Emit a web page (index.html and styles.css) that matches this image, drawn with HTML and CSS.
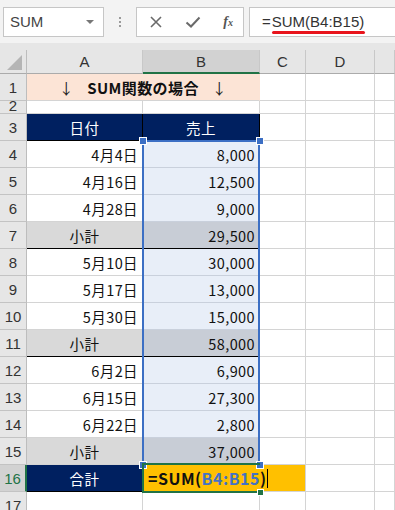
FILE: index.html
```html
<!DOCTYPE html>
<html lang="ja">
<head>
    <meta charset="UTF-8">
    <meta name="viewport" content="width=device-width, initial-scale=1.0">
    <title>SUM関数の場合</title>
    <link rel="stylesheet" href="styles.css">
</head>
<body>

    <div class="toolbar">
        <div class="name-box">
            <span>SUM</span>
            <span class="drop"></span>
        </div>
        <div class="grip"><i></i><i></i><i></i></div>
        <div class="fx-buttons">
            <svg width="14" height="14" viewBox="0 0 14 14"><path d="M2 2 L12 12 M12 2 L2 12" stroke="#6a6a6a" stroke-width="1.6" fill="none"/></svg>
            <svg width="16" height="14" viewBox="0 0 16 14"><path d="M1.5 7.5 L6 11.5 L14.5 2.5" stroke="#6a6a6a" stroke-width="2" fill="none"/></svg>
            <span class="fx">f<sub>x</sub></span>
        </div>
        <div class="formula">=<span class="mark">SUM(B4:B15)</span></div>
    </div>
    <div class="strip"></div>

    <div class="sheet">
        <!-- header row -->
        <div class="corner">
            <svg width="27" height="24" viewBox="0 0 27 24"><polygon points="7,20 22,20 22,5" fill="#b5b5b5"/></svg>
        </div>
        <div class="col-head">A</div>
        <div class="col-head active-head">B</div>
        <div class="col-head">C</div>
        <div class="col-head">D</div>
        <div class="col-head"></div>

        <!-- 1 -->
        <div class="row-head">1</div>
        <div class="c title">↓<b>SUM関数の場合</b>↓</div>
        <div class="c"></div><div class="c"></div><div class="c"></div>

        <!-- 2 -->
        <div class="row-head short"><span>2</span></div>
        <div class="c"></div><div class="c"></div><div class="c"></div><div class="c"></div><div class="c"></div>

        <!-- 3 -->
        <div class="row-head">3</div>
        <div class="c navy ctr">日付</div>
        <div class="c navy ctr">売上</div>
        <div class="c"></div><div class="c"></div><div class="c"></div>

        <div class="row-head">4</div>
        <div class="c r">4月4日</div><div class="c r sel">8,000</div>
        <div class="c"></div><div class="c"></div><div class="c"></div>

        <div class="row-head">5</div>
        <div class="c r">4月16日</div><div class="c r sel">12,500</div>
        <div class="c"></div><div class="c"></div><div class="c"></div>

        <div class="row-head">6</div>
        <div class="c r">4月28日</div><div class="c r sel">9,000</div>
        <div class="c"></div><div class="c"></div><div class="c"></div>

        <div class="row-head">7</div>
        <div class="c ctr sub">小計</div><div class="c r sub sel">29,500</div>
        <div class="c"></div><div class="c"></div><div class="c"></div>

        <div class="row-head">8</div>
        <div class="c r">5月10日</div><div class="c r sel">30,000</div>
        <div class="c"></div><div class="c"></div><div class="c"></div>

        <div class="row-head">9</div>
        <div class="c r">5月17日</div><div class="c r sel">13,000</div>
        <div class="c"></div><div class="c"></div><div class="c"></div>

        <div class="row-head">10</div>
        <div class="c r">5月30日</div><div class="c r sel">15,000</div>
        <div class="c"></div><div class="c"></div><div class="c"></div>

        <div class="row-head">11</div>
        <div class="c ctr sub">小計</div><div class="c r sub sel">58,000</div>
        <div class="c"></div><div class="c"></div><div class="c"></div>

        <div class="row-head">12</div>
        <div class="c r">6月2日</div><div class="c r sel">6,900</div>
        <div class="c"></div><div class="c"></div><div class="c"></div>

        <div class="row-head">13</div>
        <div class="c r">6月15日</div><div class="c r sel">27,300</div>
        <div class="c"></div><div class="c"></div><div class="c"></div>

        <div class="row-head">14</div>
        <div class="c r">6月22日</div><div class="c r sel">2,800</div>
        <div class="c"></div><div class="c"></div><div class="c"></div>

        <div class="row-head">15</div>
        <div class="c ctr sub last">小計</div><div class="c r sub sel">37,000</div>
        <div class="c"></div><div class="c"></div><div class="c"></div>

        <div class="row-head active-row">16</div>
        <div class="c navy ctr">合計</div>
        <div class="c editor">=SUM(<span class="ref">B4:B15</span>)<span class="caret"></span></div>
        <div class="c"></div><div class="c"></div>

        <div class="row-head">17</div>
        <div class="c"></div><div class="c"></div><div class="c"></div><div class="c"></div><div class="c"></div>

        <!-- selection overlays -->
        <div class="range"></div>
        <span class="handle h-tl"></span>
        <span class="handle h-tr"></span>
        <span class="handle h-bl"></span>
        <span class="handle h-br"></span>
        <div class="active-cell"></div>
        <span class="fill-handle"></span>
    </div>

</body>
</html>
```

FILE: styles.css
```css
body {
    margin: 0;
    width: 395px;
    height: 510px;
    overflow: hidden;
    background-color: #fff;
    font-family: "Noto Sans CJK JP", sans-serif;
}

/* formula bar */
.toolbar {
    height: 43px;
    background-color: #f3f3f3;
    display: flex;
    align-items: center;
    padding-left: 3px;
    font-family: "Liberation Sans", Arial, sans-serif;
}

.name-box {
    width: 101px;
    height: 30px;
    box-sizing: border-box;
    background-color: #fff;
    border: 1px solid #c6c6c6;
    display: flex;
    align-items: center;
    justify-content: space-between;
    padding: 0 9px 0 6px;
    font-size: 15px;
    color: #444;
}

.drop {
    width: 0;
    height: 0;
    border-left: 4px solid transparent;
    border-right: 4px solid transparent;
    border-top: 4px solid #777;
}

.grip {
    width: 32px;
    display: flex;
    flex-direction: column;
    align-items: center;
    gap: 2px;
}

.grip i {
    width: 2px;
    height: 2px;
    background-color: #9a9a9a;
}

.fx-buttons {
    width: 108px;
    height: 30px;
    box-sizing: border-box;
    background-color: #fff;
    border: 1px solid #c6c6c6;
    display: flex;
    align-items: center;
    justify-content: space-between;
    padding: 0 10px 0 12px;
}

.fx {
    font-family: "Liberation Serif", serif;
    font-style: italic;
    font-weight: bold;
    font-size: 14px;
    color: #555;
}

.fx sub {
    font-size: 10px;
    vertical-align: baseline;
}

.formula {
    flex: 1;
    margin-left: 5px;
    height: 30px;
    box-sizing: border-box;
    background-color: #fff;
    border: 1px solid #c6c6c6;
    border-right: none;
    padding-left: 12px;
    display: flex;
    align-items: center;
    font-size: 15px;
    color: #333;
}

.mark {
    position: relative;
    margin-left: 1px;
}

.mark::after {
    content: "";
    position: absolute;
    left: 0;
    right: -1px;
    bottom: -4px;
    height: 3px;
    border-radius: 2px;
    background-color: #e8141c;
}

.strip {
    height: 7px;
    background-color: #e6e6e6;
}

/* sheet grid */
.sheet {
    position: relative;
    display: grid;
    grid-template-columns: 27px 116px 117px 46px 69px 1fr;
    grid-template-rows: 24px 27px 13px repeat(15, 27px);
}

.corner {
    background-color: #e6e6e6;
    border-right: 1px solid #bdbdbd;
    border-bottom: 1px solid #ababab;
    box-sizing: border-box;
}

.corner svg {
    display: block;
}

.col-head {
    background-color: #e6e6e6;
    border-right: 1px solid #c8c8c8;
    border-bottom: 1px solid #ababab;
    box-sizing: border-box;
    display: flex;
    align-items: center;
    justify-content: center;
    font-family: "Liberation Sans", Arial, sans-serif;
    font-size: 15px;
    color: #333;
}

.active-head {
    background-color: #d2d2d2;
    border-bottom: 2px solid #217346;
}

.row-head {
    background-color: #e6e6e6;
    border-right: 1px solid #bdbdbd;
    border-bottom: 1px solid #c3c3c3;
    box-sizing: border-box;
    display: flex;
    align-items: center;
    justify-content: center;
    font-family: "Liberation Sans", Arial, sans-serif;
    font-size: 15px;
    color: #333;
    overflow: hidden;
}

.row-head.short span {
    line-height: 27px;
    margin-top: -4px;
}

.active-row {
    background-color: #d2d2d2;
    color: #217346;
    border-right: 2px solid #217346;
}

.c {
    border-right: 1px solid #d4d4d4;
    border-bottom: 1px solid #d4d4d4;
    box-sizing: border-box;
    display: flex;
    align-items: center;
    padding: 0 4px;
    font-size: 14.5px;
    letter-spacing: 0.4px;
    color: #111;
    white-space: nowrap;
    overflow: hidden;
}

.r {
    justify-content: flex-end;
}

.ctr {
    justify-content: center;
}

.title {
    grid-column: span 2;
    justify-content: center;
    gap: 13px;
    background-color: #fce4d6;
    border-right-color: #fce4d6;
    font-size: 15px;
    color: #222;
    padding-left: 4px;
}

.title b {
    color: #111;
}

.navy {
    background-color: #002060;
    color: #fff;
    border-right-color: #000;
    border-bottom-color: #000;
}

.sel {
    background-color: #e8eef8;
    border-bottom-color: #c9d0dc;
}

.sub {
    background-color: #d9d9d9;
    border-bottom-color: #000;
}

.sub.sel {
    background-color: #c8cdd6;
    border-bottom-color: #000;
}

.sub.last,
.sub.last + .sel {
    border-bottom-color: #d4d4d4;
}

.editor {
    grid-column: span 2;
    background-color: #ffc000;
    font-weight: bold;
    font-size: 16px;
    letter-spacing: 0.5px;
    padding-left: 5px;
    color: #111;
}

.ref {
    color: #4472c4;
}

.caret {
    display: inline-block;
    width: 1px;
    height: 19px;
    margin-left: 1px;
    background-color: #000;
}

/* selection overlays */
.range {
    position: absolute;
    left: 142px;
    top: 90px;
    width: 118px;
    height: 325px;
    border: 2px solid #3c6fc4;
    box-sizing: border-box;
}

.handle {
    position: absolute;
    width: 6px;
    height: 6px;
    background-color: #3c6fc4;
    border: 1px solid #fff;
}

.h-tl { left: 139px; top: 87px; }
.h-tr { left: 256px; top: 87px; }
.h-bl { left: 139px; top: 411px; }
.h-br { left: 256px; top: 411px; }

.active-cell {
    position: absolute;
    left: 142px;
    top: 413px;
    width: 118px;
    height: 30px;
    border: 2px solid #217346;
    border-right: none;
    box-sizing: border-box;
}

.fill-handle {
    position: absolute;
    left: 257px;
    top: 439px;
    width: 5px;
    height: 5px;
    background-color: #217346;
    border: 1px solid #fff;
}
```
